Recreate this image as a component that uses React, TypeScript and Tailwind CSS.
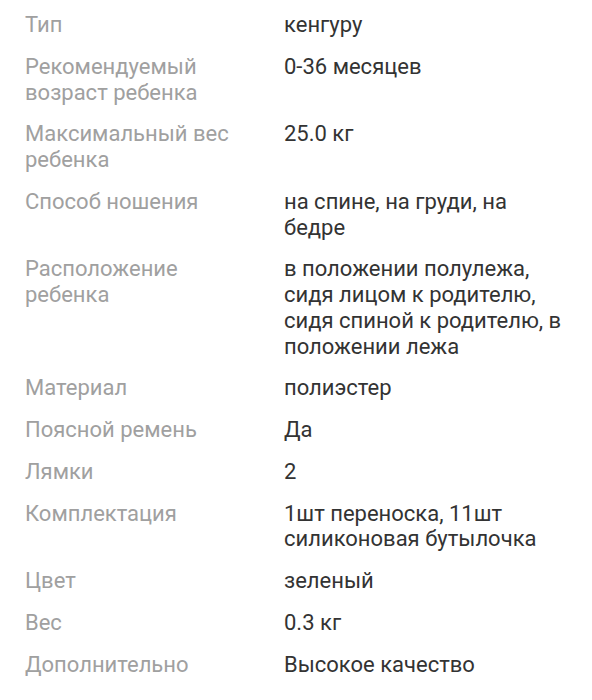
const rows: [string, string][] = [
    ['Тип', 'кенгуру'],
    ['Рекомендуемый возраст ребенка', '0-36 месяцев'],
    ['Максимальный вес ребенка', '25.0 кг'],
    ['Способ ношения', 'на спине, на груди, на бедре'],
    ['Расположение ребенка', 'в положении полулежа, сидя лицом к родителю, сидя спиной к родителю, в положении лежа'],
    ['Материал', 'полиэстер'],
    ['Поясной ремень', 'Да'],
    ['Лямки', '2'],
    ['Комплектация', '1шт переноска, 11шт силиконовая бутылочка'],
    ['Цвет', 'зеленый'],
    ['Вес', '0.3 кг'],
    ['Дополнительно', 'Высокое качество'],
];

export default function App() {
    return (
        <div className="w-[592px] h-[700px] bg-white overflow-hidden font-['Roboto',sans-serif]">
            <div className="grid grid-cols-[220px_1fr] gap-x-[39px] gap-y-4 pl-[25px] pr-[24px] pt-3 text-[22px] leading-[25.75px]">
                {rows.map(([label, value]) => (
                    <div key={label} className="contents">
                        <div className="text-[#a0a0a0]">{label}</div>
                        <div className="text-[#333333]">{value}</div>
                    </div>
                ))}
            </div>
        </div>
    );
}
